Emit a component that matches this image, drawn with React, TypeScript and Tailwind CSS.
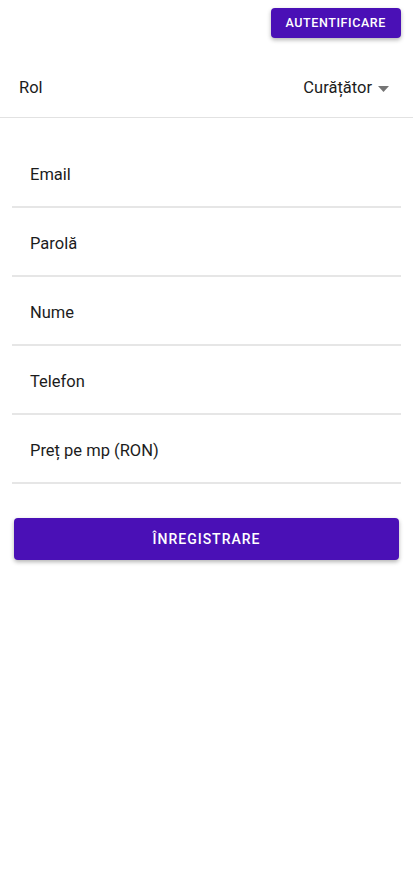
const fields = ['Email', 'Parolă', 'Nume', 'Telefon', 'Preț pe mp (RON)'];

export default function App() {
  return (
    <div className="min-h-[886px] w-full bg-white text-[#1c1c1c]" style={{ fontFamily: 'Roboto, "Noto Sans", sans-serif' }}>
      <div className="flex justify-end px-3 pt-2">
        <button className="h-[30px] rounded-[4px] bg-[#4a10b6] px-[15px] text-[12.5px] font-medium tracking-[0.6px] text-white shadow-[0_2px_4px_rgba(0,0,0,0.3)]">
          AUTENTIFICARE
        </button>
      </div>

      <div className="mt-[22px] flex h-[58px] items-center justify-between border-b border-[#e2e2e2] pl-[19px] pr-[24px]">
        <span className="text-[16.5px]">Rol</span>
        <div className="flex items-center gap-[6px]">
          <span className="text-[16.5px]">Curățător</span>
          <svg width="11" height="6" viewBox="0 0 11 6">
            <path d="M0 0 L11 0 L5.5 6 Z" fill="#757575" />
          </svg>
        </div>
      </div>

      <div className="mt-[21px] px-3">
        {fields.map((f) => (
          <div key={f} className="flex h-[69px] items-center border-b-2 border-[#e6e6e6] pl-[18px] pt-[5px]">
            <span className="text-[16.5px]">{f}</span>
          </div>
        ))}
      </div>

      <div className="mt-[34px] px-[14px]">
        <button className="h-[42px] w-full rounded-[4px] bg-[#4a10b6] text-[14px] font-medium tracking-[1px] text-white shadow-[0_2px_4px_rgba(0,0,0,0.3)]">
          ÎNREGISTRARE
        </button>
      </div>
    </div>
  );
}
